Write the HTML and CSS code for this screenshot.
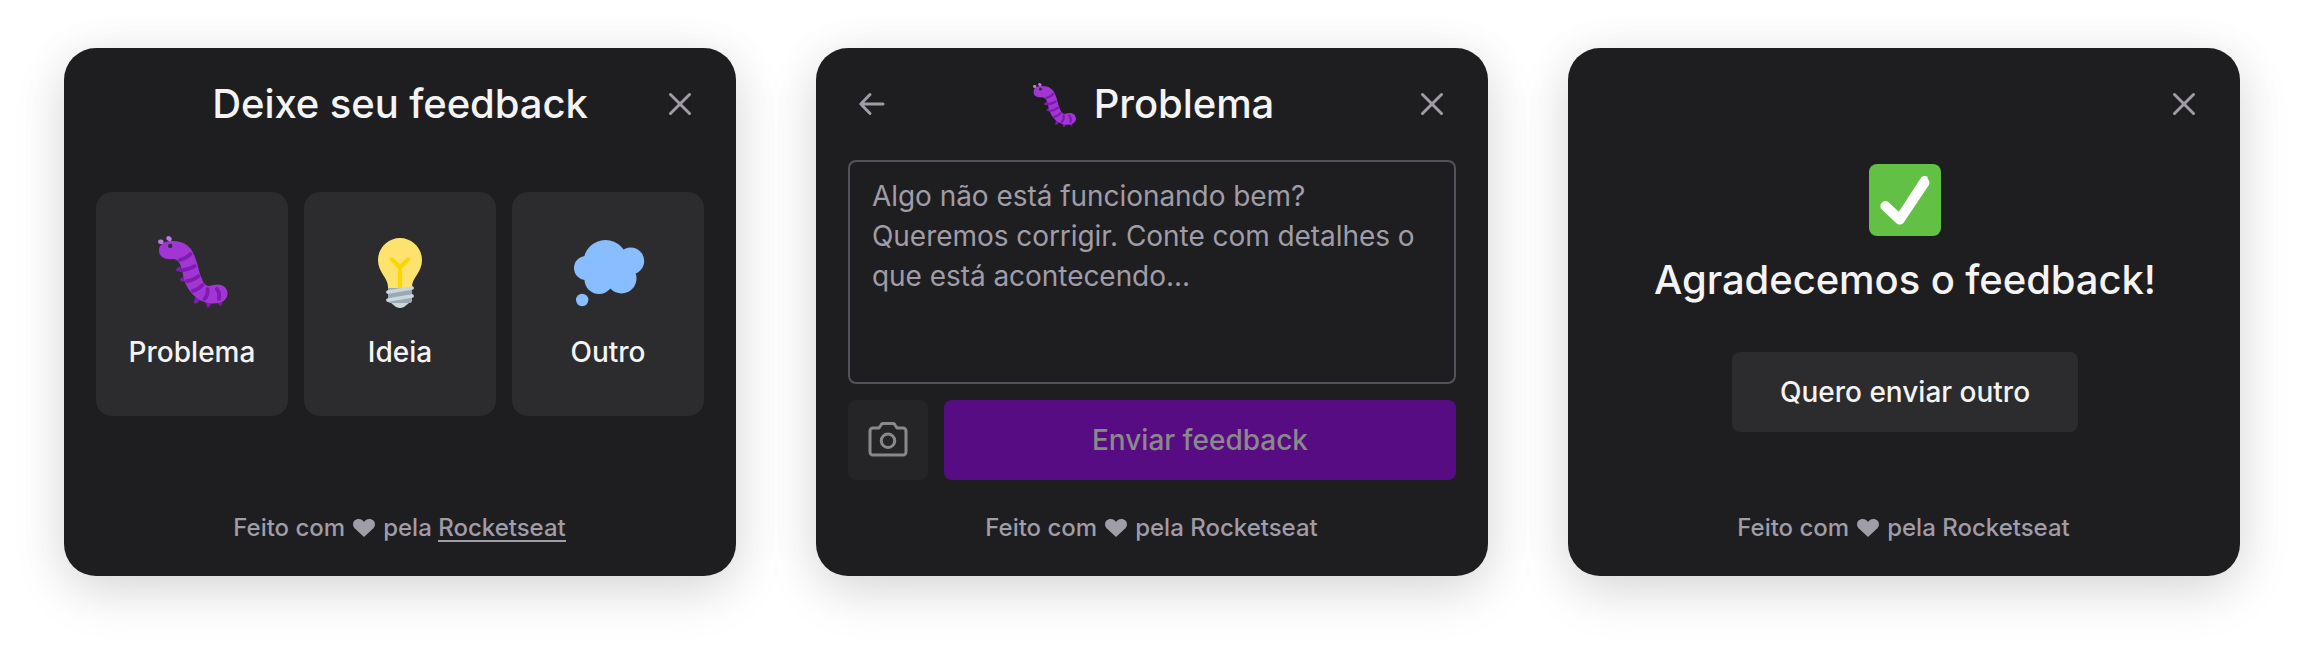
FILE: index.html
```html
<!DOCTYPE html>
<html lang="pt-BR">
<head>
<meta charset="utf-8">
<title>Feedback widget</title>
<link rel="stylesheet" href="styles.css">
</head>
<body>
<svg class="sprite" aria-hidden="true">
  <symbol id="close" viewBox="0 0 32 32"><path d="M25.500 6.500 6.500 25.500M25.500 25.500 6.500 6.500" /></symbol>
  <symbol id="back" viewBox="0 0 32 32"><path d="M27 16H5M14 6.500 4.800 16l9.200 9.500" /></symbol>
  <symbol id="heart" viewBox="0 0 22 20"><path d="M11 19 1.900 10.400C-2 6.500.6 1 5.600 1 8 1 9.900 2.100 11 3.900 12.100 2.100 14 1 16.400 1c5 0 7.600 5.500 3.700 9.400Z"/></symbol>
  <symbol id="bug" viewBox="-3 0 110 100">
    <g fill="#7f1caf">
      <path d="M40 46l-4 3q-1 3 6 3zM44 56l-4 3q-1 3 6 3zM55 77l-1 6q2 2 6-3zM65 81l2 6q2 2 5-5zM76 81l4 5q3-1 2-6z"/>
    </g>
    <g fill="none" stroke="#b97ae2" stroke-linecap="round">
      <path stroke-width="2" d="M24 25l-3-3M31 22l-2-3"/>
      <path stroke-width="4.600" d="M20.300 21.700h1M28.500 18.300l1 .6"/>
    </g>
    <path fill="#a136d4" d="M19 30.500C19 24 25 21 33 21c11 0 18 5 22 16 3 8 4 16 7 22 1.500 4 3.500 7 7 7 3-1 6-1.500 9-1.500 5.500 0 9.500 4 9.500 9 0 6.500-6 10-14 10-13 0-22-8-27-18-5-11-4-27-14-26.500-8 1-13.500-2.500-13.500-8.500z"/>
    <g fill="none" stroke="#7f1caf" stroke-width="3.800" stroke-linecap="round">
      <path d="M40 40q7-2 10.500-6M43.500 50q7-1 11-4M47 61q7-1 11.500-5M53 71q6-2 9.500-6M64.500 79q4-4 3-10M79 79q1-6-2-10"/>
    </g>
    <circle cx="30.200" cy="26" r="2.200" fill="#292f33"/>
  </symbol>
</svg>
<main class="board">
  <section class="card">
    <header class="head">
      <h1 class="title">Deixe seu feedback</h1>
      <button class="icon-btn close"><svg><use href="#close"/></svg></button>
    </header>
    <div class="options">
      <button class="option"><svg class="pic"><use href="#bug"/></svg>Problema</button>
      <button class="option">
        <svg class="pic" viewBox="0 0 110 100">
          <path fill="#fde26d" d="M55 18c12 0 22 10 22 22 0 13-10 17-10 27v3H43v-3c0-10-10-14-10-27 0-12 10-22 22-22z"/>
          <path fill="none" stroke="#ffd500" stroke-width="4" stroke-linecap="round" stroke-linejoin="round" d="M47 39.500l8 8 8-8"/>
          <path stroke="#ffd500" stroke-width="4" d="M55 47v21"/>
          <path fill="#99aab5" d="M43 68h24v13q0 2-3 2H46q-3 0-3-2z"/>
          <path fill="#ccd6dd" d="M46 83h18l-5 4q-4 2-8 0z"/>
          <path stroke="#ccd6dd" stroke-width="3.800" stroke-linecap="round" d="M43 72l24-4M43 80l24-4"/>
        </svg>Ideia</button>
      <button class="option">
        <svg class="pic" viewBox="1 0 110 100">
          <g fill="#88beff">
            <circle cx="53.500" cy="42" r="22"/><circle cx="78.700" cy="41" r="13.500"/><circle cx="34" cy="48" r="12"/><circle cx="47" cy="59.500" r="14.500"/><circle cx="69.500" cy="58.500" r="15"/><circle cx="30.200" cy="80" r="6.200"/>
          </g>
        </svg>Outro</button>
    </div>
    <footer class="foot"><span>Feito com</span><svg><use href="#heart"/></svg><span>pela <a class="link">Rocketseat</a></span></footer>
  </section>

  <section class="card">
    <header class="head">
      <button class="icon-btn back"><svg><use href="#back"/></svg></button>
      <h1 class="title"><svg class="title-pic"><use href="#bug"/></svg>Problema</h1>
      <button class="icon-btn close"><svg><use href="#close"/></svg></button>
    </header>
    <div class="field">Algo não está funcionando bem? Queremos corrigir. Conte com detalhes o que está acontecendo...</div>
    <div class="actions">
      <button class="camera"><svg viewBox="0 0 256 256"><path d="M208 208H48a16 16 0 0 1-16-16V80a16 16 0 0 1 16-16h32l16-24h64l16 24h32a16 16 0 0 1 16 16v112a16 16 0 0 1-16 16Z"/><circle cx="128" cy="132" r="36"/></svg></button>
      <button class="send">Enviar feedback</button>
    </div>
    <footer class="foot"><span>Feito com</span><svg><use href="#heart"/></svg><span>pela Rocketseat</span></footer>
  </section>

  <section class="card">
    <header class="head">
      <button class="icon-btn close"><svg><use href="#close"/></svg></button>
    </header>
    <div class="done">
      <svg class="check" viewBox="0 0 36 36"><rect width="36" height="36" rx="4" fill="#62c044"/><path fill="#fff" d="M29.280 6.362a2.502 2.502 0 0 0-3.458.736L14.936 23.877l-5.029-4.650a2.500 2.500 0 1 0-3.394 3.671l7.209 6.666c.48.445 1.090.665 1.696.665.673 0 1.534-.282 2.099-1.139.332-.506 12.209-18.270 12.209-18.270a2.500 2.500 0 0 0-.446-3.458z"/></svg>
      <h1 class="title">Agradecemos o feedback!</h1>
      <button class="again">Quero enviar outro</button>
    </div>
    <footer class="foot"><span>Feito com</span><svg><use href="#heart"/></svg><span>pela Rocketseat</span></footer>
  </section>
</main>
</body>
</html>
```
FILE: styles.css
```css
* { box-sizing: border-box; }
body { margin: 0; background: #fff; font-family: Inter, "Liberation Sans", sans-serif; }
button { border: 0; padding: 0; margin: 0; background: none; font: inherit; color: inherit; }
.sprite { position: absolute; width: 0; height: 0; }
.board { display: flex; gap: 80px; padding: 48px 64px; height: 656px; overflow: hidden; }
.card {
  width: 672px; height: 528px; padding: 32px; flex: none;
  display: flex; flex-direction: column;
  background: #1e1e20; color: #f4f4f5; border-radius: 32px;
  box-shadow: 0 8px 48px rgba(0, 0, 0, .08), 0 16px 56px rgba(0, 0, 0, .1);
}
.head { position: relative; height: 48px; flex: none; display: flex; justify-content: center; }
.title { margin: 0; font-size: 40px; line-height: 48px; font-weight: 500; letter-spacing: -.08px; display: flex; align-items: center; gap: 16px; white-space: nowrap; }
.title-pic { width: 68px; height: 62px; margin: 0 -10px; }
.icon-btn { position: absolute; top: 8px; width: 32px; height: 32px; }
.close { right: 8px; }
.back { left: 8px; }
.icon-btn svg { display: block; width: 32px; height: 32px; fill: none; stroke: #a09ca8; stroke-width: 3; stroke-linecap: round; stroke-linejoin: round; }
.options { display: grid; grid-template-columns: repeat(3, 192px); gap: 16px; margin-top: 64px; }
.option { height: 224px; padding-top: 28px; border-radius: 16px; background: #2c2c2e; font-size: 28px; line-height: 48px; font-weight: 500; display: flex; flex-direction: column; align-items: center; }
.pic { width: 110px; height: 100px; flex: none; margin-bottom: 8px; }
.foot { margin-top: auto; height: 32px; display: flex; justify-content: center; align-items: center; font-size: 24px; line-height: 32px; font-weight: 500; color: #a09ca8; padding-right: 1px; }
.foot svg { width: 22px; height: 20px; margin: 0 8px; fill: #a09ca8; }
.link { box-shadow: inset 0 -2px 0 #a09ca8; }
.field { margin-top: 32px; height: 224px; border: 2px solid #52525b; border-radius: 8px; padding: 14px 22px; font-size: 28px; line-height: 40px; letter-spacing: -.05px; color: #a09ca8; }
.actions { display: flex; gap: 16px; margin-top: 16px; height: 80px; }
.camera { width: 80px; border-radius: 8px; background: #252527; display: flex; align-items: center; justify-content: center; }
.camera svg { width: 48px; height: 48px; fill: none; stroke: #898989; stroke-width: 16; stroke-linejoin: round; }
.send { flex: 1; border-radius: 8px; background: #580c83; color: #898989; font-size: 28px; font-weight: 500; }
.done { display: flex; flex-direction: column; align-items: center; padding: 36px 0 0 2px; }
.check { width: 72px; height: 72px; margin-bottom: 20px; }
.again { margin-top: 48px; height: 80px; padding: 0 48px; border-radius: 8px; background: #2c2c2e; font-size: 28px; font-weight: 500; }
```
